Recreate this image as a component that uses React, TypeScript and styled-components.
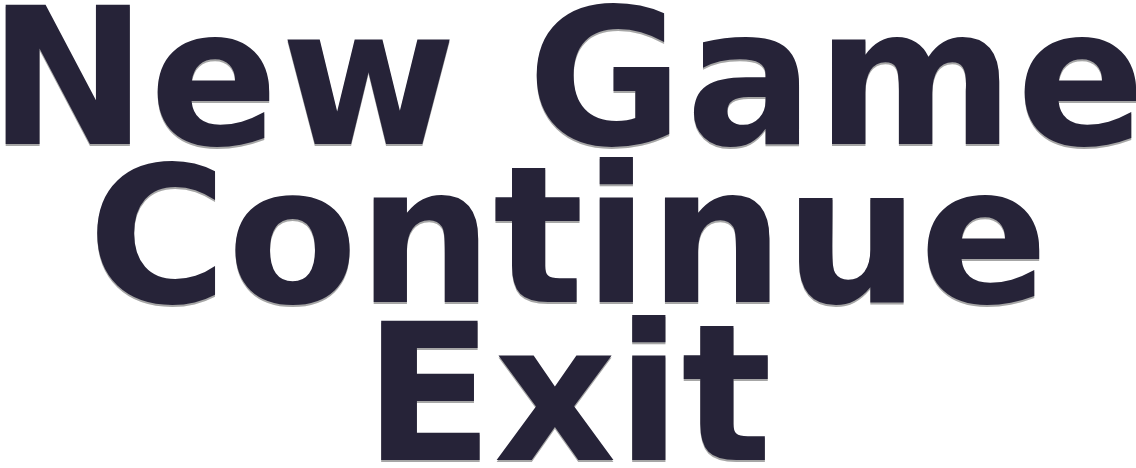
import React from "react";
import styled, { createGlobalStyle } from "styled-components";

const GlobalStyle = createGlobalStyle`
  html, body {
    margin: 0;
    padding: 0;
    background: #ffffff;
    overflow: hidden;
  }
`;

const Menu = styled.nav`
  display: flex;
  flex-direction: column;
  align-items: center;
  width: 100%;
`;

const MenuItem = styled.button<{ $spacing?: number }>`
  background: none;
  border: none;
  padding: 0;
  margin: 0;
  cursor: pointer;
  font-family: "DejaVu Sans", sans-serif;
  font-weight: 700;
  font-size: 190px;
  line-height: 158px;
  letter-spacing: ${(p) => p.$spacing ?? 0}px;
  color: #262338;
  text-shadow: 0 2px 0 #a6a6a6;
  white-space: nowrap;
`;

const items = [
  { label: "New Game", spacing: 2.4 },
  { label: "Continue" },
  { label: "Exit" },
];

export default function App() {
  return (
    <>
      <GlobalStyle />
      <Menu>
        {items.map((item) => (
          <MenuItem key={item.label} $spacing={item.spacing}>
            {item.label}
          </MenuItem>
        ))}
      </Menu>
    </>
  );
}
